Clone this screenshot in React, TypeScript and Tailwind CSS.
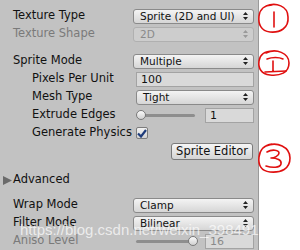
import React from "react";

const font = { fontFamily: '"DejaVu Sans", Verdana, sans-serif' };

const Arrows = ({ dim = false }: { dim?: boolean }) => (
  <svg width="5" height="8" viewBox="0 0 5 8" className="shrink-0">
    <path d="M2.5 0 L5 3 L0 3 Z M2.5 8 L5 5 L0 5 Z" fill={dim ? "#9a9a9a" : "#222"} />
  </svg>
);

const Dropdown = ({ value, disabled = false }: { value: string; disabled?: boolean }) => (
  <div
    className={
      "flex h-[15px] w-full items-center justify-between whitespace-nowrap rounded-[3px] border pl-[6px] pr-[5px] text-[10.5px] leading-none " +
      (disabled
        ? "border-[#b0b0b0] bg-[#cdcdcd] text-[#8a8a8a]"
        : "border-[#8a8a8a] bg-gradient-to-b from-[#f4f4f4] to-[#d6d6d6] text-[#111]")
    }
  >
    <span>{value}</span>
    <Arrows dim={disabled} />
  </div>
);

const Field = ({ value, dim = false }: { value: string; dim?: boolean }) => (
  <div
    className={
      "flex h-[15px] w-full items-center border border-[#a3a3a3] bg-[#d9d9d9] pl-[4px] text-[11px] leading-none " +
      (dim ? "text-[#8a8a8a]" : "text-[#111]")
    }
  >
    {value}
  </div>
);

const Slider = ({ value, pos, dim = false }: { value: string; pos: "left" | "right"; dim?: boolean }) => (
  <div className="flex w-full items-center gap-[7px]">
    <div className="relative h-[15px] flex-1">
      <div className="absolute left-[3px] right-[3px] top-[6px] h-[3px] rounded-full bg-[#8e8e8e]" />
      <div
        className={
          "absolute top-[2px] h-[10px] w-[10px] rounded-full border border-[#7a7a7a] bg-gradient-to-b from-[#fafafa] to-[#d0d0d0] " +
          (pos === "left" ? "left-0" : "right-0")
        }
      />
    </div>
    <div className="w-[49px]">
      <Field value={value} dim={dim} />
    </div>
  </div>
);

const Row = ({
  label,
  indent = false,
  dim = false,
  children,
}: {
  label: string;
  indent?: boolean;
  dim?: boolean;
  children?: React.ReactNode;
}) => (
  <div className={"flex h-[18px] items-center pr-[4px] " + (indent ? "pl-[32px]" : "pl-[13px]")}>
    <div className={"shrink-0 whitespace-nowrap text-[11.5px] " + (indent ? "w-[104px]" : "w-[120px]") + (dim ? " text-[#7a7a7a]" : " text-[#111]")}>
      {label}
    </div>
    <div className="flex min-w-0 flex-1 items-center">{children}</div>
  </div>
);

export default function App() {
  return (
    <div className="relative flex h-[250px] w-[300px] overflow-hidden bg-white" style={font}>
      <div className="flex w-[259px] flex-col border-r border-[#9a9a9a] bg-[#c2c2c2] pt-[7px]">
        <Row label="Texture Type">
          <Dropdown value="Sprite (2D and UI)" />
        </Row>
        <Row label="Texture Shape" dim>
          <Dropdown value="2D" disabled />
        </Row>

        <div className="mt-[9px]">
          <Row label="Sprite Mode">
            <Dropdown value="Multiple" />
          </Row>
          <Row label="Pixels Per Unit" indent>
            <Field value="100" />
          </Row>
          <Row label="Mesh Type" indent>
            <Dropdown value="Tight" />
          </Row>
          <Row label="Extrude Edges" indent>
            <Slider value="1" pos="left" />
          </Row>
          <Row label="Generate Physics" indent>
            <div className="flex h-[12px] w-[12px] items-center justify-center rounded-[2px] border border-[#7c7c7c] bg-gradient-to-b from-[#f2f2f2] to-[#d2d2d2]">
              <svg width="10" height="9" viewBox="0 0 10 9">
                <path d="M1 4.5 L4 7.5 L9 1" fill="none" stroke="#1d3b7a" strokeWidth="2.2" />
              </svg>
            </div>
          </Row>
          <div className="mt-[1px] flex h-[18px] justify-end pr-[5px]">
            <div className="flex h-[17px] w-[82px] items-center justify-center whitespace-nowrap rounded-[3px] border border-[#7a7a7a] bg-gradient-to-b from-[#f6f6f6] to-[#d4d4d4] text-[11.5px] text-[#111]">
              Sprite Editor
            </div>
          </div>
        </div>

        <div className="mt-[10px] flex h-[18px] items-center pl-[3px]">
          <svg width="9" height="9" viewBox="0 0 9 9" className="mr-[1px]">
            <path d="M0 0 L9 4.5 L0 9 Z" fill="#6a6a6a" />
          </svg>
          <span className="text-[11.5px] text-[#111]">Advanced</span>
        </div>

        <div className="mt-[7px]">
          <Row label="Wrap Mode">
            <Dropdown value="Clamp" />
          </Row>
          <Row label="Filter Mode">
            <Dropdown value="Bilinear" />
          </Row>
          <Row label="Aniso Level" dim>
            <Slider value="16" pos="right" dim />
          </Row>
        </div>
      </div>

      <div className="flex-1" />

      <svg className="pointer-events-none absolute left-0 top-0" width="300" height="250" viewBox="0 0 300 250">
        <g fill="none" stroke="#e01010" strokeWidth="1.6" strokeLinecap="round" strokeLinejoin="round">
          <path d="M266 6 C276 2 288 6 288 17 C289 28 280 33 270 32 C261 31 258 24 259 16 C260 9 265 5 272 5" />
          <path d="M274 12 L274 27" />
          <path d="M266 53 C276 48 289 53 289 63 C289 73 280 76 270 75 C261 74 258 68 259 61 C260 54 266 51 273 51" />
          <path d="M267 59 C272 57 279 57 283 59 M273 61 L273 71 M265 72 L286 71" />
          <path d="M266 146 C277 141 290 147 290 158 C290 169 281 173 270 172 C261 171 258 165 259 157 C260 149 265 145 272 144" />
          <path d="M267 152 C272 149 279 150 279 153 C279 156 274 158 271 158 C277 158 282 160 281 164 C280 168 272 168 266 166" />
        </g>
      </svg>

      <div
        className="pointer-events-none absolute left-[20px] top-[219px] whitespace-nowrap text-[15px] text-white/70"
        style={{ fontFamily: '"Liberation Sans", Arial, sans-serif' }}
      >
        https://blog.csdn.net/weixin_39849161
      </div>
    </div>
  );
}
